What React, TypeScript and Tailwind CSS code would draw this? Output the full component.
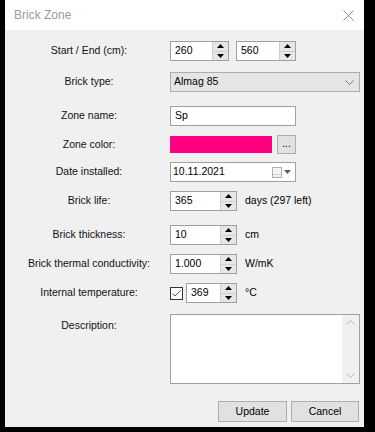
import React from "react";

const font = { fontFamily: '"Liberation Sans", Arial, sans-serif' };

// tiny up/down spinner like the WinForms NumericUpDown
const Spinner = () => (
  <div className="flex flex-col w-[16px] h-full border-l border-[#cfcfcf]">
    <div className="flex-1 flex items-center justify-center bg-[#e6e6e6] border-b border-[#cfcfcf]">
      <svg width="7" height="4" viewBox="0 0 7 4">
        <path d="M0 4 L3.5 0 L7 4 Z" fill="#000" />
      </svg>
    </div>
    <div className="flex-1 flex items-center justify-center bg-[#e6e6e6]">
      <svg width="7" height="4" viewBox="0 0 7 4">
        <path d="M0 0 L3.5 4 L7 0 Z" fill="#000" />
      </svg>
    </div>
  </div>
);

const SpinBox = ({ value, width }: { value: string; width: string }) => (
  <div className={`flex h-[20px] ${width} bg-white border border-[#a0a0a0]`}>
    <div className="flex-1 flex items-center pl-[4px] text-[10.5px] text-black">{value}</div>
    <Spinner />
  </div>
);

const Row = ({
  label,
  mt,
  children,
}: {
  label: string;
  mt: string;
  children: React.ReactNode;
}) => (
  <div className={`grid grid-cols-[150px_1fr] gap-x-[6px] items-center ${mt}`}>
    <div className="text-center text-[10.5px] text-[#111]">{label}</div>
    <div className="flex items-center">{children}</div>
  </div>
);

export default function App() {
  return (
    <div className="w-[375px] h-[432px] bg-black pl-[5px]" style={font}>
      <div className="w-[359px] h-[427px] flex flex-col bg-[#f0f0f0]">
        {/* title bar */}
        <div className="h-[30px] bg-white flex items-center justify-between pl-[9px] pr-[10px]">
          <span className="text-[12px] text-[#9a9a9a]">Brick Zone</span>
          <svg width="11" height="11" viewBox="0 0 11 11">
            <path d="M0.5 0.5 L10.5 10.5 M10.5 0.5 L0.5 10.5" stroke="#8a8a8a" strokeWidth="1" />
          </svg>
        </div>

        <div className="flex flex-col pl-[9px] pr-[4px]">
          <Row label="Start / End (cm):" mt="mt-[11px]">
            <SpinBox value="260" width="w-[59px]" />
            <div className="w-[7px]" />
            <SpinBox value="560" width="w-[60px]" />
          </Row>

          <Row label="Brick type:" mt="mt-[11px]">
            <div className="flex-1 h-[20px] flex items-center justify-between bg-[#e5e5e5] border border-[#adadad] pl-[3px] pr-[5px] text-[10.5px] text-black">
              <span>Almag 85</span>
              <svg width="9" height="5" viewBox="0 0 9 5">
                <path d="M0.5 0.5 L4.5 4.5 L8.5 0.5" stroke="#777" fill="none" strokeWidth="1" />
              </svg>
            </div>
          </Row>

          <Row label="Zone name:" mt="mt-[14px]">
            <div className="w-[126px] h-[20px] flex items-center bg-white border border-[#a0a0a0] pl-[4px] text-[10.5px] text-black">
              Sp
            </div>
          </Row>

          <Row label="Zone color:" mt="mt-[9px]">
            <div className="w-[102px] h-[17px] bg-[#ff0080]" />
            <div className="w-[5px]" />
            <div className="w-[19px] h-[19px] flex items-end justify-center pb-[4px] bg-[#e1e1e1] border border-[#adadad] text-[10px] leading-none text-black">
              ...
            </div>
          </Row>

          <Row label="Date installed:" mt="mt-[8px]">
            <div className="w-[126px] h-[20px] flex items-center justify-between bg-white border border-[#a0a0a0] pl-[2px] pr-[4px] text-[10.5px] text-black">
              <span>10.11.2021</span>
              <div className="flex items-center gap-[2px]">
                <div className="w-[10px] h-[11px] border border-[#b0b0b0] bg-[#f4f4f4] flex flex-col justify-end">
                  <div className="h-[3px] border-t border-[#d0d0d0]" />
                </div>
                <svg width="7" height="4" viewBox="0 0 7 4">
                  <path d="M0 0 L3.5 4 L7 0 Z" fill="#4a5f86" />
                </svg>
              </div>
            </div>
          </Row>

          <Row label="Brick life:" mt="mt-[9px]">
            <SpinBox value="365" width="w-[67px]" />
            <span className="ml-[8px] text-[10.5px] text-black">days (297 left)</span>
          </Row>

          <Row label="Brick thickness:" mt="mt-[14px]">
            <SpinBox value="10" width="w-[67px]" />
            <span className="ml-[8px] text-[10.5px] text-black">cm</span>
          </Row>

          <Row label="Brick thermal conductivity:" mt="mt-[9px]">
            <SpinBox value="1.000" width="w-[67px]" />
            <span className="ml-[8px] text-[10.5px] text-black">W/mK</span>
          </Row>

          <Row label="Internal temperature:" mt="mt-[9px]">
            <div className="w-[13px] h-[13px] bg-white border border-[#333] flex items-center justify-center">
              <svg width="9" height="7" viewBox="0 0 9 7">
                <path d="M0.5 3.5 L3 6 L8.5 0.5" stroke="#555" fill="none" strokeWidth="1" />
              </svg>
            </div>
            <div className="w-[3px]" />
            <SpinBox value="369" width="w-[51px]" />
            <span className="ml-[8px] text-[10.5px] text-black">°C</span>
          </Row>

          <div className="grid grid-cols-[150px_1fr] gap-x-[6px] mt-[11px]">
            <div className="text-center text-[10.5px] text-[#111] pt-[4px]">Description:</div>
            <div className="h-[70px] flex bg-white border border-[#a0a0a0]">
              <div className="flex-1" />
              <div className="w-[17px] bg-[#f0f0f0] flex flex-col items-center justify-between py-[5px]">
                <svg width="9" height="5" viewBox="0 0 9 5">
                  <path d="M0.5 4.5 L4.5 0.5 L8.5 4.5" stroke="#b5b5b5" fill="none" strokeWidth="1" />
                </svg>
                <svg width="9" height="5" viewBox="0 0 9 5">
                  <path d="M0.5 0.5 L4.5 4.5 L8.5 0.5" stroke="#b5b5b5" fill="none" strokeWidth="1" />
                </svg>
              </div>
            </div>
          </div>

          <div className="flex justify-end gap-[4px] mt-[17px] pr-[1px]">
            <button className="w-[69px] h-[21px] bg-[#e1e1e1] border border-[#adadad] text-[10.5px] text-black">
              Update
            </button>
            <button className="w-[68px] h-[21px] bg-[#e1e1e1] border border-[#adadad] text-[10.5px] text-black">
              Cancel
            </button>
          </div>
        </div>
      </div>
    </div>
  );
}
